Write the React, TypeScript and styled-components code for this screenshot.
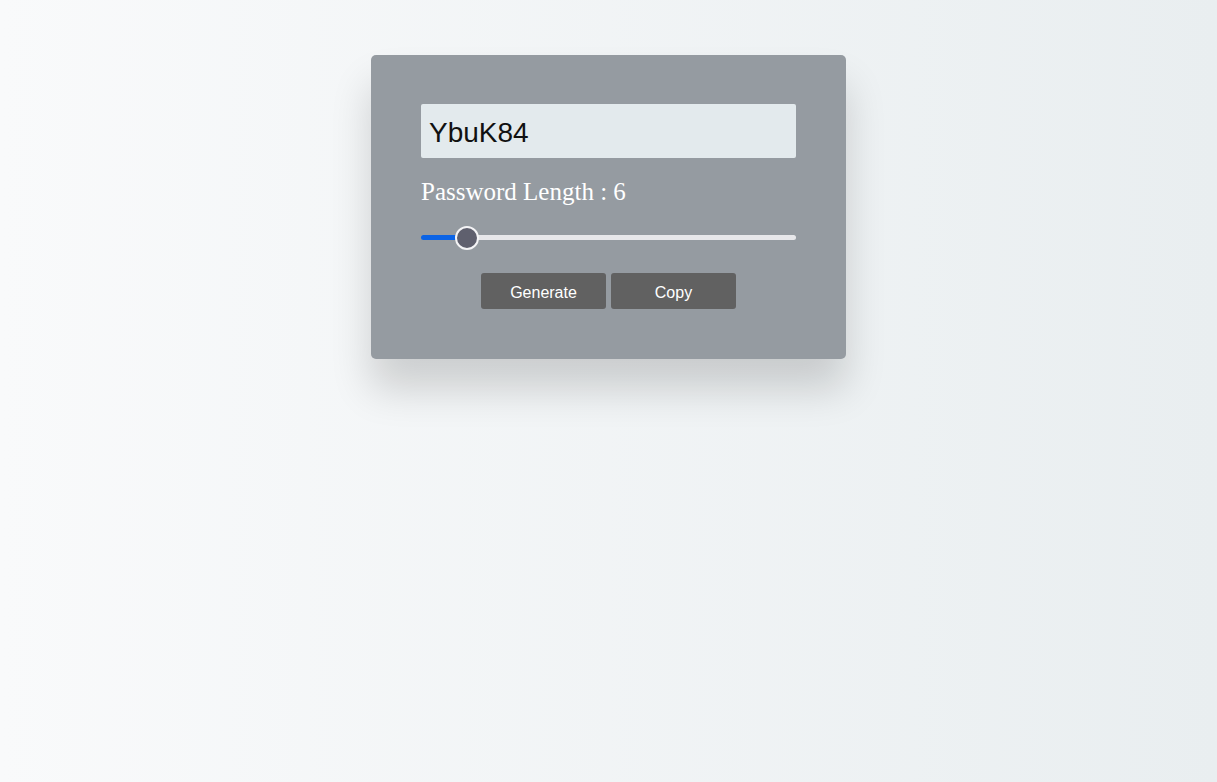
import { useState } from "react";
import styled, { createGlobalStyle } from "styled-components";

const GlobalStyle = createGlobalStyle`
    html, body {
        margin: 0;
        padding: 0;
    }
    body {
        min-height: 100vh;
        background: linear-gradient(to right, #f9fafb, #e9eef0);
        font-family: "Liberation Sans", Arial, sans-serif;
    }
`;

const MIN = 1;
const MAX = 52;

const App = () => {
    const [length, setLength] = useState(6);
    const fill = ((length - MIN) / (MAX - MIN)) * 100;

    return (
        <>
            <GlobalStyle />
            <Page>
                <Card>
                    <PasswordField type="text" readOnly value="YbuK84" />
                    <LengthLabel>Password Length : {length}</LengthLabel>
                    <Slider
                        type="range"
                        min={MIN}
                        max={MAX}
                        value={length}
                        onChange={(e) => setLength(Number(e.target.value))}
                        style={{
                            background: `linear-gradient(to right, #0b63e5 ${fill}%, #e7e7ea ${fill}%)`,
                        }}
                    />
                    <Actions>
                        <ActionButton>Generate</ActionButton>
                        <ActionButton>Copy</ActionButton>
                    </Actions>
                </Card>
            </Page>
        </>
    );
};

const Page = styled.main`
    display: flex;
    justify-content: center;
    padding-top: 55px;
`;

const Card = styled.section`
    box-sizing: border-box;
    width: 475px;
    padding: 49px 50px 50px;
    background: #959ba1;
    border-radius: 5px;
    box-shadow: 0 30px 40px rgba(0, 0, 0, 0.16);
    display: flex;
    flex-direction: column;
`;

const PasswordField = styled.input`
    box-sizing: border-box;
    width: 100%;
    height: 54px;
    margin: 0;
    padding: 4px 8px 0;
    border: none;
    border-radius: 2px;
    background: #e3eaed;
    color: #111;
    font-family: "Liberation Sans", Arial, sans-serif;
    font-size: 28px;
    outline: none;
`;

const LengthLabel = styled.label`
    margin-top: 20px;
    line-height: 28px;
    font-family: "Liberation Serif", "Times New Roman", serif;
    font-size: 25px;
    color: #ffffff;
`;

const Slider = styled.input`
    -webkit-appearance: none;
    appearance: none;
    width: 100%;
    height: 5px;
    margin: 29px 0 33px;
    border-radius: 3px;
    outline: none;

    &::-webkit-slider-thumb {
        -webkit-appearance: none;
        width: 24px;
        height: 24px;
        border-radius: 50%;
        background: #5f606e;
        border: 2px solid #f4f4f6;
        box-sizing: border-box;
        cursor: pointer;
    }
`;

const Actions = styled.div`
    display: flex;
    justify-content: center;
    gap: 5px;
`;

const ActionButton = styled.button`
    width: 125px;
    height: 36px;
    padding: 3px 0 0;
    border: none;
    border-radius: 3px;
    background: #616161;
    color: #ffffff;
    font-family: "Liberation Sans", Arial, sans-serif;
    font-size: 16px;
    cursor: pointer;
`;

export default App;
